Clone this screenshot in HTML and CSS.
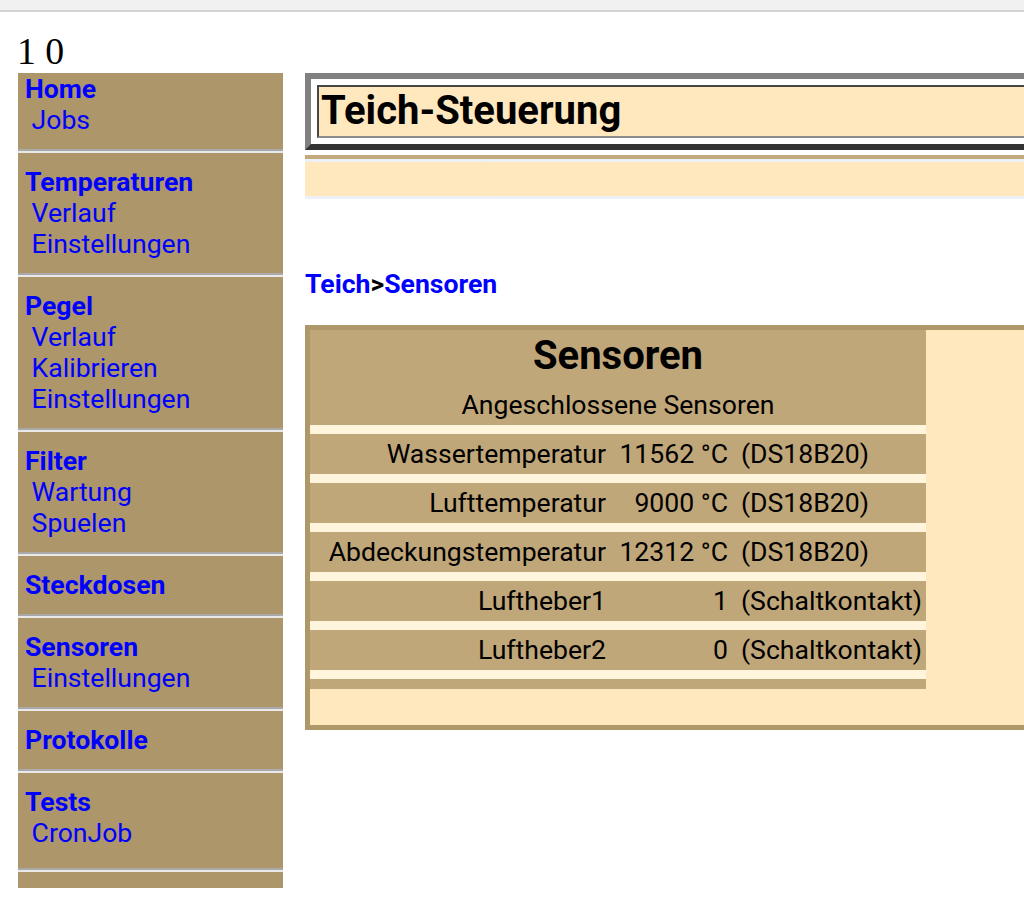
FILE: index.html
```html
<!DOCTYPE html>
<html lang="de">
<head>
<meta charset="utf-8">
<title>Teich-Steuerung – Sensoren</title>
<link rel="stylesheet" href="styles.css">
</head>
<body>
<div class="topbar"></div>
<div class="counter">1 0</div>
<div class="layout">
  <nav class="sidebar">
    <div class="sec first">
      <a class="head" href="#">Home</a>
      <a class="sub" href="#">&nbsp;Jobs</a>
    </div>
    <hr class="sep">
    <div class="sec">
      <a class="head" href="#">Temperaturen</a>
      <a class="sub" href="#">&nbsp;Verlauf</a>
      <a class="sub" href="#">&nbsp;Einstellungen</a>
    </div>
    <hr class="sep">
    <div class="sec">
      <a class="head" href="#">Pegel</a>
      <a class="sub" href="#">&nbsp;Verlauf</a>
      <a class="sub" href="#">&nbsp;Kalibrieren</a>
      <a class="sub" href="#">&nbsp;Einstellungen</a>
    </div>
    <hr class="sep">
    <div class="sec">
      <a class="head" href="#">Filter</a>
      <a class="sub" href="#">&nbsp;Wartung</a>
      <a class="sub" href="#">&nbsp;Spuelen</a>
    </div>
    <hr class="sep">
    <div class="sec">
      <a class="head" href="#">Steckdosen</a>
    </div>
    <hr class="sep">
    <div class="sec">
      <a class="head" href="#">Sensoren</a>
      <a class="sub" href="#">&nbsp;Einstellungen</a>
    </div>
    <hr class="sep">
    <div class="sec">
      <a class="head" href="#">Protokolle</a>
    </div>
    <hr class="sep">
    <div class="sec last">
      <a class="head" href="#">Tests</a>
      <a class="sub" href="#">&nbsp;CronJob</a>
    </div>
    <hr class="sep">
    <div class="tail"></div>
  </nav>

  <main class="main">
    <div class="header">
      <div class="header-cell"><h1 class="title">Teich-Steuerung</h1></div>
    </div>
    <div class="nav">
      <div class="navrow">
        <div class="navcell navcell-first"></div>
        <div class="navcell"></div>
      </div>
    </div>
    <div class="crumb"><a href="#">Teich</a>&gt;<a href="#">Sensoren</a></div>

    <div class="box">
      <div class="stable">
        <div class="shead">
          <h2 class="stitle">Sensoren</h2>
          <div class="ssub">Angeschlossene Sensoren</div>
        </div>
        <div class="srow"><span class="lab">Wassertemperatur</span><span class="val">11562 °C</span><span class="unit">(DS18B20)</span></div>
        <div class="srow"><span class="lab">Lufttemperatur</span><span class="val">9000 °C</span><span class="unit">(DS18B20)</span></div>
        <div class="srow"><span class="lab">Abdeckungstemperatur</span><span class="val">12312 °C</span><span class="unit">(DS18B20)</span></div>
        <div class="srow"><span class="lab">Luftheber1</span><span class="val">1</span><span class="unit">(Schaltkontakt)</span></div>
        <div class="srow"><span class="lab">Luftheber2</span><span class="val">0</span><span class="unit">(Schaltkontakt)</span></div>
        <div class="send"></div>
      </div>
    </div>
  </main>
</div>
</body>
</html>
```

FILE: styles.css
```css
html, body {
  margin: 0;
  padding: 0;
  background: #ffffff;
  overflow: hidden;
}

body {
  font-family: Roboto, "Noto Sans", "Liberation Sans", sans-serif;
  font-size: 26.6px;
  line-height: 31px;
  color: #000;
}

.topbar {
  height: 10px;
  background: #f1f1f1;
  border-bottom: 2px solid #d4d4d4;
}

.counter {
  font-family: "Liberation Serif", "Times New Roman", serif;
  font-size: 37.8px;
  line-height: 44px;
  margin: 17px 0 0 17px;
}

.layout {
  display: flex;
  align-items: flex-start;
  gap: 22px;
  padding-left: 18px;
  width: 1100px;
}

/* Sidebar */
.sidebar {
  width: 265px;
  flex: none;
  background: #ad9669;
}

.sec {
  padding: 13px 7px 14px;
}

.sec.first {
  padding-top: 0;
}

.sec.last {
  padding-bottom: 20px;
}

.sidebar a {
  display: block;
  color: #0000ff;
  text-decoration: none;
  white-space: pre;
}

.sidebar a.head {
  font-weight: 700;
}

.sep {
  margin: 0;
  border: 0;
  height: 0;
  border-top: 2px solid #a9a9a9;
  border-bottom: 2px solid #e9e9e9;
}

.tail {
  height: 16px;
}

/* Main */
.main {
  width: 760px;
  flex: none;
}

.header {
  border: 6px solid;
  border-color: #808080 #333333 #333333 #808080;
  padding: 6px;
  background: #ffffff;
}

.header-cell {
  border: 2px solid;
  border-color: #474747 #8c8c8c #8c8c8c #474747;
  background: #ffe8be;
  padding: 1px 2px 2px;
}

.title {
  margin: 0;
  font-size: 40px;
  line-height: 46px;
  font-weight: 700;
}

.nav {
  margin-top: 5px;
  border-top: 4px solid #c3a97b;
}

.navrow {
  display: flex;
  height: 34px;
  border-top: 3px solid #eef0f8;
  border-bottom: 3px solid #eef0f8;
  background: #ffe8be;
}

.navcell {
  flex: 1;
}

.navcell-first {
  flex: none;
  width: 175px;
  border-right: 1px solid #fde7c1;
}

.crumb {
  margin-top: 69px;
  font-weight: 700;
}

.crumb a {
  color: #0000ff;
  text-decoration: none;
}

/* Sensor box */
.box {
  margin-top: 26px;
  border: 5px solid #ae9769;
  background: #ffe8be;
  padding-bottom: 36px;
}

.stable {
  width: 616px;
  background: #c0a779;
}

.shead {
  padding: 5px 0 5px;
  text-align: center;
}

.stitle {
  margin: 0 0 12px;
  font-size: 40px;
  line-height: 42px;
  font-weight: 700;
}

.srow {
  display: grid;
  grid-template-columns: 303px 122px 1fr;
  align-items: center;
  box-sizing: border-box;
  height: 49px;
  border-top: 9px solid #fff5dc;
  padding-bottom: 1px;
  white-space: nowrap;
}

.lab {
  text-align: right;
  padding-right: 7px;
}

.val {
  text-align: right;
  padding-right: 7px;
}

.unit {
  padding-left: 6px;
}

.send {
  border-top: 9px solid #fff5dc;
  height: 10px;
}
```
